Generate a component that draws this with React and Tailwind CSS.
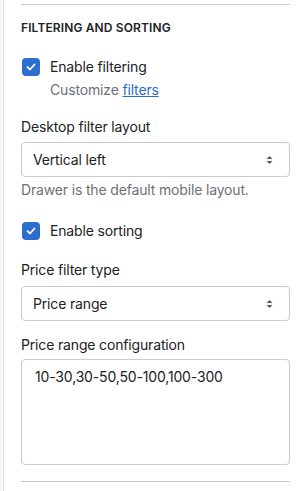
import React from "react";

function Check() {
  return (
    <span className="flex h-[18px] w-[18px] shrink-0 items-center justify-center rounded-[4px] bg-[#2c6ecb]">
      <svg width="12" height="12" viewBox="0 0 12 12" fill="none">
        <path d="M2.5 6.2 L5 8.5 L9.5 3.5" stroke="white" strokeWidth="1.8" strokeLinecap="round" strokeLinejoin="round" />
      </svg>
    </span>
  );
}

function Select({ value }) {
  return (
    <div className="flex h-[35px] items-center justify-between rounded-[4px] border border-[#c9cccf] bg-white pl-[11px] pr-[16px] text-[14px] leading-[20px] text-[#202223]">
      <span>{value}</span>
      <svg width="7" height="10" viewBox="0 0 7 10">
        <path d="M3.5 1 L6.5 4 H0.5 Z" fill="#5c5f62" />
        <path d="M3.5 9 L6.5 6 H0.5 Z" fill="#5c5f62" />
      </svg>
    </div>
  );
}

export default function App() {
  return (
    <div
      className="flex min-h-[491px] w-[304px] bg-white tracking-[-0.01em]"
      style={{ fontFamily: "Inter, 'Liberation Sans', sans-serif" }}
    >
      <div className="w-[4px] shrink-0 border-r border-[#e1e3e5] bg-[#f6f6f7]" />
      <div className="flex flex-1 flex-col pl-[17px] pr-[14px] pt-[4px]">
        <div className="h-px bg-[#c9cccf]" />
        <div className="mt-[15px] text-[12px] font-semibold uppercase leading-[16px] tracking-[0.01em] text-[#202223]">
          Filtering and sorting
        </div>

        <div className="mt-[21px] flex h-[20px] items-center gap-[10px] pl-[1px]">
          <Check />
          <span className="text-[14px] leading-[20px] text-[#202223]">Enable filtering</span>
        </div>
        <div className="mt-[3px] pl-[29px] text-[14px] leading-[20px] text-[#6d7175]">
          Customize <span className="text-[#2c6ecb] underline">filters</span>
        </div>

        <div className="mt-[17px] text-[14px] leading-[20px] text-[#202223]">Desktop filter layout</div>
        <div className="mt-[5px]">
          <Select value="Vertical left" />
        </div>
        <div className="mt-[3px] text-[14px] leading-[20px] text-[#6d7175]">Drawer is the default mobile layout.</div>

        <div className="mt-[21px] flex h-[20px] items-center gap-[10px] pl-[1px]">
          <Check />
          <span className="text-[14px] leading-[20px] text-[#202223]">Enable sorting</span>
        </div>

        <div className="mt-[19px] text-[14px] leading-[20px] text-[#202223]">Price filter type</div>
        <div className="mt-[6px]">
          <Select value="Price range" />
        </div>

        <div className="mt-[14px] text-[14px] leading-[20px] text-[#202223]">Price range configuration</div>
        <div className="mt-[4px] h-[106px] rounded-[4px] border border-[#c9cccf] bg-white px-[13px] pt-[7px] text-[14px] leading-[20px] text-[#202223]">
          10-30,30-50,50-100,100-300
        </div>
        <div className="mt-[16px] h-px bg-[#c9cccf]" />
      </div>
    </div>
  );
}
